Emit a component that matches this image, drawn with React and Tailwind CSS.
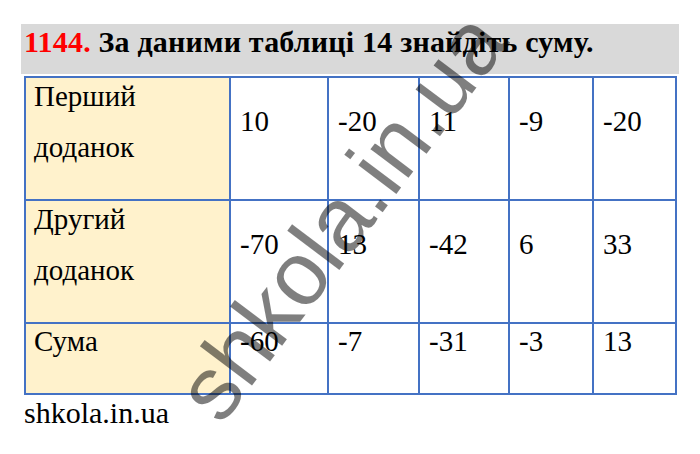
export default function App() {
  const rows = [
    { label: ["Перший", "доданок"], values: ["10", "-20", "11", "-9", "-20"], h: "h-[123px]" },
    { label: ["Другий", "доданок"], values: ["-70", "13", "-42", "6", "33"], h: "h-[123px]" },
    { label: ["Сума"], values: ["-60", "-7", "-31", "-3", "13"], h: "h-[71px]" },
  ];

  return (
    <div className="relative w-[700px] h-[454px] overflow-hidden bg-white font-['Liberation_Serif','Times_New_Roman',serif] text-black">
      <div className="ml-[21px] mt-[24px] w-[658px] h-[50px] bg-[#d9d9d9] pl-[3px] font-['Liberation_Serif',serif] text-[30px] font-bold leading-[36px] tracking-[0.2px]">
        <span className="text-[#ff0000]">1144.</span> За даними таблиці 14 знайдіть суму.
      </div>

      <div className="ml-[24px] mt-[2px] grid w-[653px] grid-cols-[205px_98px_91px_90px_84px_83px] border-l-2 border-t-2 border-[#4472c4]">
        {rows.map((row, i) => (
          <div key={i} className="contents">
            <div className={`${row.h} flex items-center border-b-2 border-r-2 border-[#4472c4] bg-[#fff2cc] pl-[8px] pb-[34px]`}>
              <div className="font-['Liberation_Serif',serif] text-[29px] leading-[51px]">
                {row.label.map((l) => (
                  <div key={l}>{l}</div>
                ))}
              </div>
            </div>
            {row.values.map((v, j) => (
              <div key={j} className={`${row.h} flex items-center border-b-2 border-r-2 border-[#4472c4] pl-[9px] pb-[34px]`}>
                <span className="font-['Liberation_Serif',serif] text-[29px] leading-[51px]">{v}</span>
              </div>
            ))}
          </div>
        ))}
      </div>

      <div className="ml-[24px] font-['Liberation_Serif',serif] text-[30px] leading-[36px]">shkola.in.ua</div>

      <div className="pointer-events-none absolute left-[341px] top-[216px] -translate-x-1/2 -translate-y-1/2 -rotate-[53deg] whitespace-nowrap font-['Liberation_Sans',sans-serif] text-[90px] leading-none text-black/50">
        shkola.in.ua
      </div>
    </div>
  );
}
